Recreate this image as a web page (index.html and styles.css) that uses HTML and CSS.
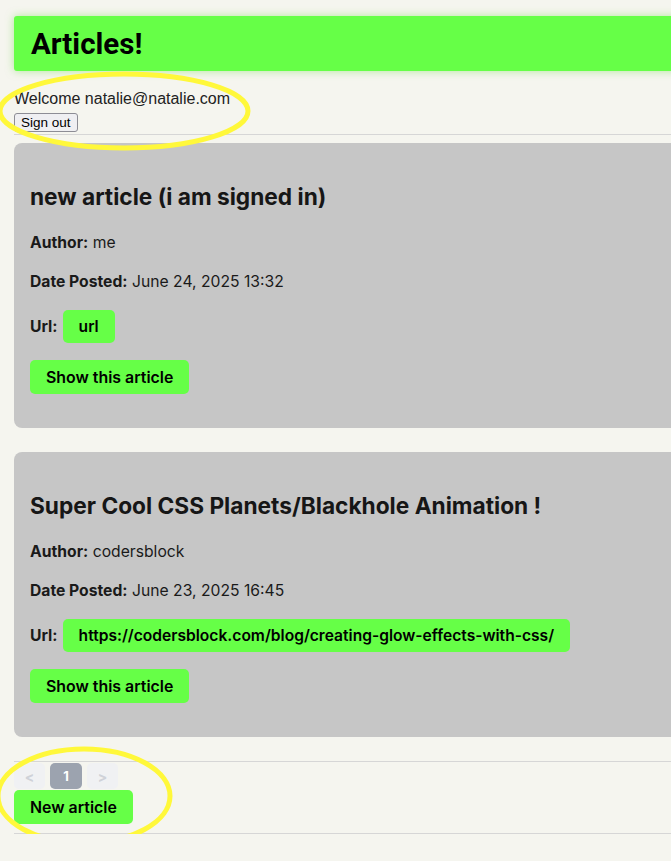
FILE: index.html
```html
<!DOCTYPE html>
<html lang="en">
<head>
<meta charset="utf-8">
<title>Articles</title>
<link rel="stylesheet" href="styles.css">
</head>
<body>
<div class="page">
  <header class="banner"><h1>Articles!</h1></header>
  <div class="session">
    <p class="welcome">Welcome natalie@natalie.com</p>
    <button class="signout">Sign out</button>
  </div>
  <hr class="rule rule-top">
  <section class="articles">
    <article class="card">
      <h2>new article (i am signed in)</h2>
      <p class="meta meta-author"><b>Author:</b> me</p>
      <p class="meta meta-date"><b>Date Posted:</b> June 24, 2025 13:32</p>
      <div class="url-row"><b>Url:</b> <a class="pill">url</a></div>
      <div class="actions"><a class="pill btn">Show this article</a></div>
    </article>
    <article class="card">
      <h2>Super Cool CSS Planets/Blackhole Animation !</h2>
      <p class="meta meta-author"><b>Author:</b> codersblock</p>
      <p class="meta meta-date"><b>Date Posted:</b> June 23, 2025 16:45</p>
      <div class="url-row"><b>Url:</b> <a class="pill">https://codersblock.com/blog/creating-glow-effects-with-css/</a></div>
      <div class="actions"><a class="pill btn">Show this article</a></div>
    </article>
  </section>
  <hr class="rule rule-mid">
  <nav class="pager">
    <span class="pg pg-arrow">&lt;</span>
    <span class="pg pg-current">1</span>
    <span class="pg pg-arrow">&gt;</span>
  </nav>
  <a class="pill new-btn">New article</a>
  <hr class="rule rule-bottom">
</div>
<svg class="marks" width="671" height="861" viewBox="0 0 671 861">
  <ellipse cx="124" cy="111" rx="124" ry="37" fill="none" stroke="#fff83a" stroke-width="5"/>
  <ellipse cx="84" cy="796" rx="86" ry="47" fill="none" stroke="#fff83a" stroke-width="5"/>
</svg>
</body>
</html>
```
FILE: styles.css
```css
html {
  overflow: hidden;
  background: #f5f5ef;
}
body {
  margin: 0;
  background: #f5f5ef;
  font-family: "Inter", "Liberation Sans", sans-serif;
  color: #1a1a1a;
  position: relative;
}
.page {
  width: 720px;
  padding: 16px 0 0 14px;
}
.banner {
  background: #66ff47;
  height: 55px;
  border-radius: 3px;
  box-shadow: 0 0 8px rgba(120, 220, 80, 0.55);
  display: flex;
  align-items: center;
  padding-left: 17px;
}
.banner h1 {
  margin: 0;
  font-family: "Roboto", "Liberation Sans", sans-serif;
  font-weight: 700;
  font-size: 29.5px;
  color: #000;
}
.session {
  padding-top: 19px;
}
.welcome {
  margin: 0;
  font-family: "Liberation Sans", "Roboto", sans-serif;
  font-size: 16px;
  line-height: 18px;
  color: #222;
}
.signout {
  margin-top: 5px;
  font-family: "Liberation Sans", sans-serif;
  font-size: 13.5px;
  height: 19px;
  padding: 0 6px;
  background: #efeff2;
  border: 1px solid #8d8d95;
  border-radius: 3px;
  color: #000;
  display: block;
}
.rule {
  border: 0;
  border-top: 1px solid #d6d6d6;
  margin: 0;
}
.rule-top { margin-top: 2px; }
.articles {
  display: flex;
  flex-direction: column;
  gap: 24px;
  margin-top: 8px;
}
.card {
  background: #c6c6c6;
  border-radius: 8px;
  padding: 16px 16px 34px;
}
.card h2 {
  margin: 24px 0 0;
  font-size: 22.7px;
  line-height: 27px;
  font-weight: 700;
  color: #161616;
}
.meta {
  margin: 0;
  font-size: 15.7px;
  line-height: 18px;
}
.meta-author { margin-top: 24px; }
.meta-date { margin-top: 21px; }
.meta b, .url-row b { font-weight: 700; }
.url-row {
  margin-top: 19px;
  display: flex;
  align-items: center;
  gap: 5px;
  font-size: 15.7px;
}
.pill {
  display: inline-flex;
  align-items: center;
  background: #66ff47;
  color: #000;
  font-weight: 600;
  font-size: 15.6px;
  height: 33px;
  padding: 0 16px;
  border-radius: 5px;
  box-sizing: border-box;
}
.actions {
  margin-top: 17px;
  display: flex;
}
.btn { height: 34px; padding: 0 16px; font-size: 15.9px; }
.rule-mid { margin-top: 24px; }
.pager {
  display: flex;
  gap: 5px;
  margin-top: 1px;
}
.pg {
  width: 31px;
  height: 26px;
  border-radius: 5px;
  display: flex;
  align-items: center;
  justify-content: center;
  font-size: 13px;
  font-weight: 700;
}
.pg-arrow {
  background: #f0f1f3;
  color: #cfd2d8;
  font-size: 14px;
}
.pg-current {
  width: 32px;
  background: #9ca3af;
  color: #fff;
}
.new-btn {
  height: 34px;
  padding: 0 16px;
  margin-top: 1px;
  font-size: 15.9px;
}
.rule-bottom { margin-top: 9px; }
.marks {
  position: absolute;
  left: 0;
  top: 0;
  pointer-events: none;
  filter: blur(0.6px);
}
```
